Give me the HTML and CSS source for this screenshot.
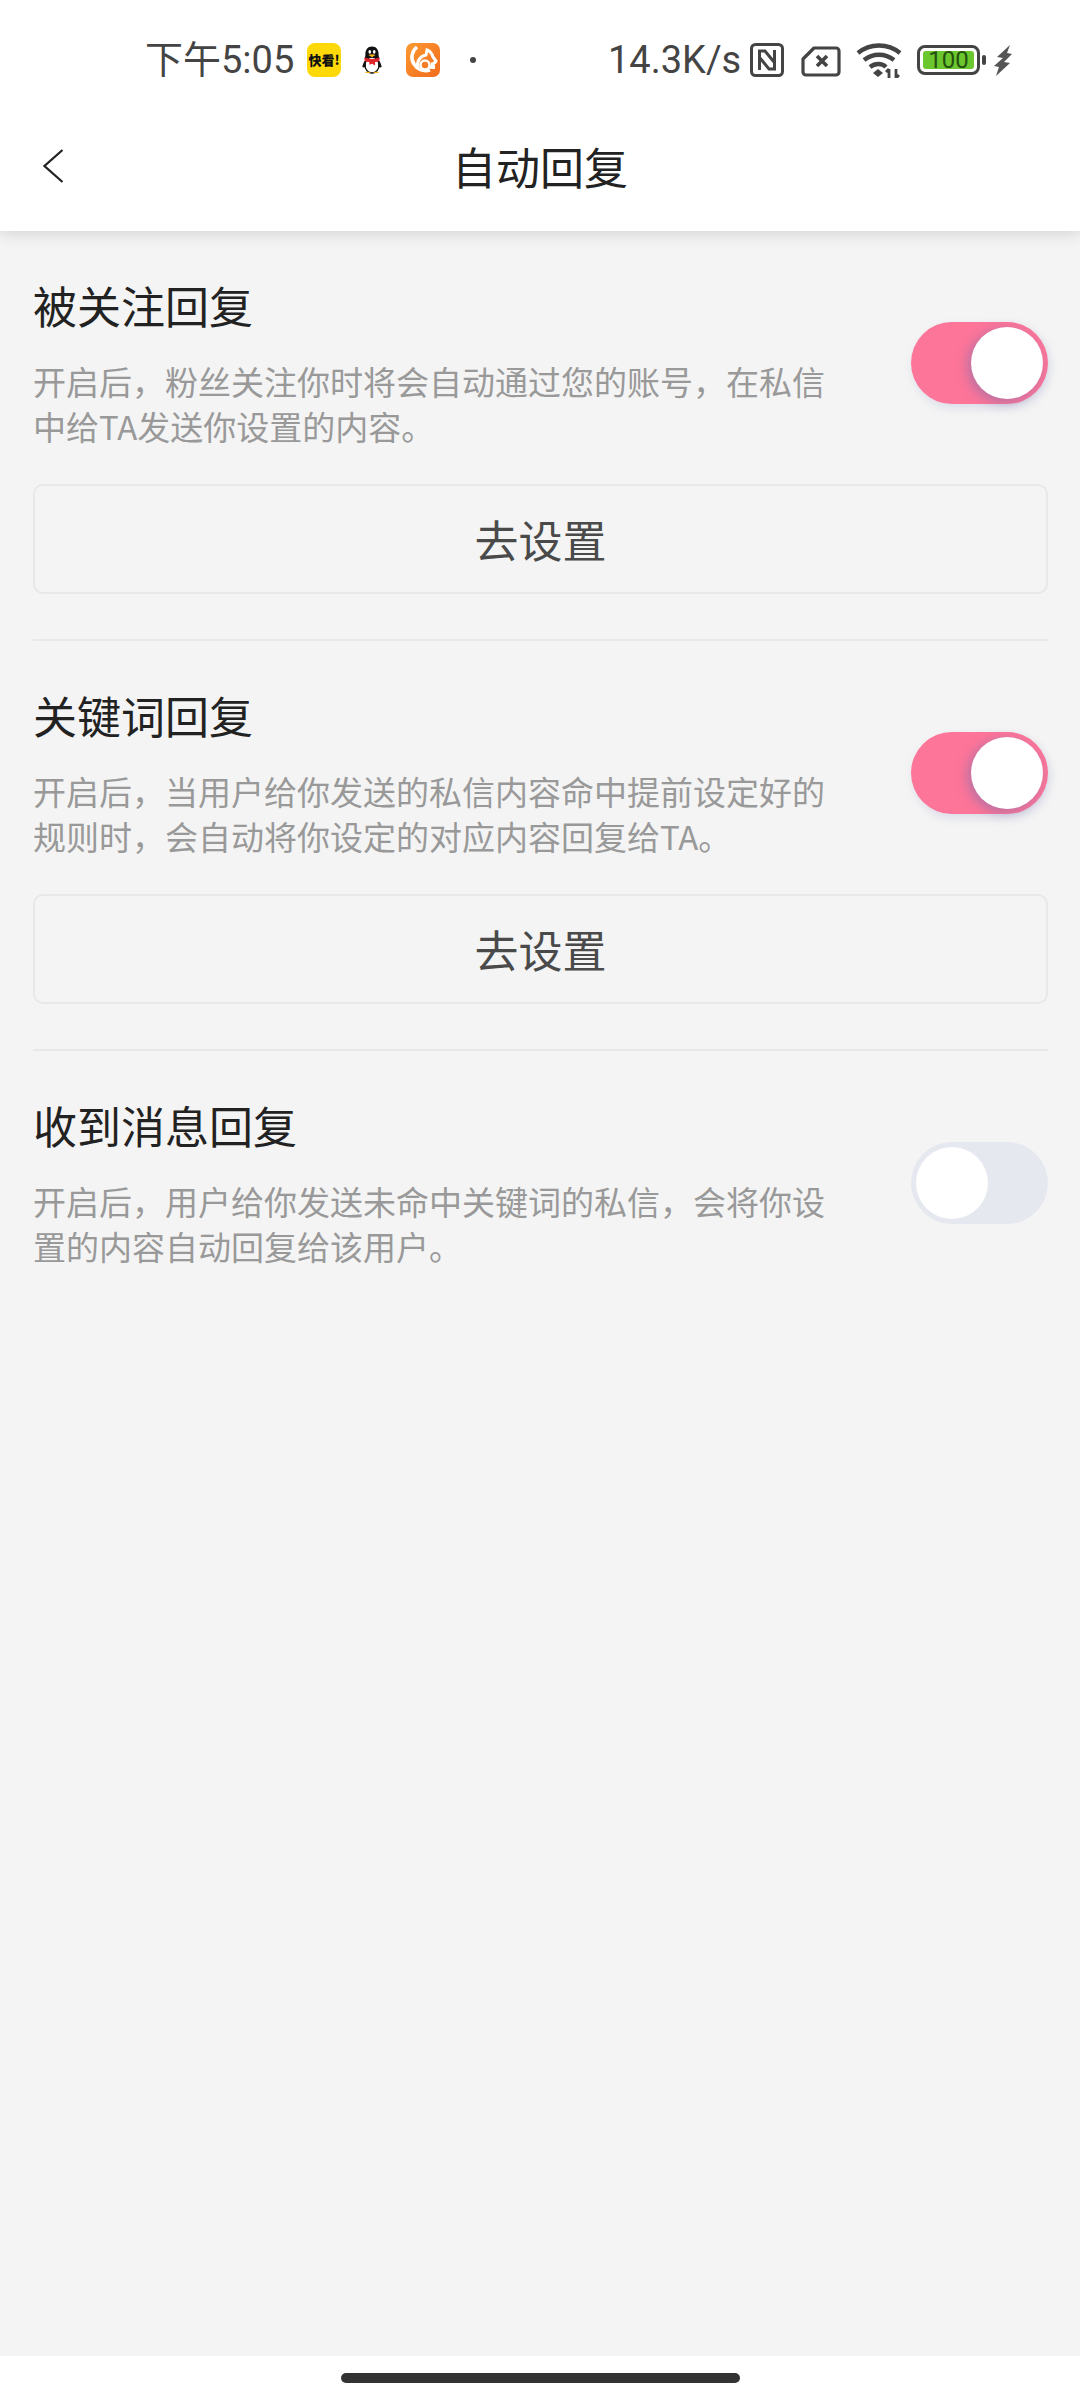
FILE: index.html
```html
<!DOCTYPE html>
<html lang="zh-CN">

<head>
    <meta charset="UTF-8">
    <meta name="viewport" content="width=device-width, initial-scale=1.0">
    <title>自动回复</title>
    <link rel="stylesheet" href="styles.css">
</head>

<body>
    <header class="top">
        <div class="status">
            <div class="status-left">
                <span class="clock">下午5:05</span>
                <span class="kuai">快看!</span>
                <svg class="ic-qq" viewBox="-2 -2 34 38.500">
                    <path d="M15 2c-5 0-7.500 4-7.500 9 0 2-.5 3.500-1 5l17 0c-.5-1.500-1-3-1-5 0-5-2.500-9-7.500-9z" fill="#111"/>
                    <ellipse cx="15" cy="23" rx="8" ry="9" fill="#fff" stroke="#111" stroke-width="1.500"/>
                    <path d="M4 25c1-4 2-6 4-8v8c-2 1-3 1-4 0zM26 25c-1-4-2-6-4-8v8c2 1 3 1 4 0z" fill="#111"/>
                    <path d="M6.500 14.500c5 2 12 2 17 0v3.500c-2 1-3.500 1.500-5 1.500v4l-3.500-2-3 1v-3c-2 0-4-.5-5.500-1.500z" fill="#e0262b"/>
                    <ellipse cx="12.500" cy="8" rx="1.500" ry="2.200" fill="#fff"/>
                    <ellipse cx="17.500" cy="8" rx="1.500" ry="2.200" fill="#fff"/>
                    <path d="M11 11.500c2-1 6-1 8 0l-4 2.500z" fill="#f7b21c"/>
                    <path d="M7 32c1-2 5-2 7 0zM16 32c2-2 6-2 7 0z" fill="#f7b21c"/>
                </svg>
                <svg class="ic-uc" viewBox="0 0 34 34">
                    <defs>
                        <linearGradient id="ucbg" x1="0" y1="0" x2="1" y2="1">
                            <stop offset="0" stop-color="#fb9a30"/>
                            <stop offset="1" stop-color="#f26a1b"/>
                        </linearGradient>
                    </defs>
                    <rect width="34" height="34" rx="7" fill="url(#ucbg)"/>
                    <path d="M11 4c-5 4-7 11-3 17 3 5 9 8 16 6" fill="none" stroke="#fff" stroke-width="3.500"/>
                    <path d="M12 25c-2-6 2-12 8-13l1-5c3 1 5 4 6 7l3 4c-1 2-3 3-5 3" fill="none" stroke="#fff" stroke-width="3"/>
                    <circle cx="19" cy="22" r="4.500" fill="none" stroke="#fff" stroke-width="2.500"/>
                    <rect x="24" y="22" width="5" height="4" fill="#fff"/>
                </svg>
                <i class="dot"></i>
            </div>
            <div class="status-right">
                <span class="speed">14.3K/s</span>
                <svg class="ic-nfc" viewBox="0 0 34 34" fill="none" stroke="#444" stroke-width="3">
                    <rect x="1.500" y="1.500" width="31" height="31" rx="4"/>
                    <path d="M9.500 27V8h5.500l9 11"/>
                    <path d="M24.500 7v19h-5.500l-9-11"/>
                </svg>
                <svg class="ic-sim" viewBox="0 0 40 31" fill="none" stroke="#444" stroke-width="3.200">
                    <path d="M13 2h22a3 3 0 0 1 3 3v21a3 3 0 0 1-3 3H5a3 3 0 0 1-3-3V13z" stroke-linejoin="round"/>
                    <path d="M16 10l10 10M26 10L16 20" stroke-width="3.600"/>
                </svg>
                <svg class="ic-wifi" viewBox="0 0 46 35" fill="none" stroke="#444" stroke-width="4.400">
                    <path d="M2 10c12-10 30-10 42 0"/>
                    <path d="M8 17c9-7 21-7 30 0"/>
                    <path d="M14 24c5-4 12-4 16 0"/>
                    <path d="M17 30l5-4 5 4-5 4z" fill="#444" stroke="none"/>
                    <path d="M33 35v-9m-3 3l3-3M40 26v9m3-3l-3 3" stroke-width="2.800"/>
                </svg>
                <span class="batt"><span class="batt-fill">100</span></span>
                <i class="batt-cap"></i>
                <svg class="ic-bolt" viewBox="0 0 18 31">
                    <path d="M16 0L3 12l6 1-9 8 5 1-3 9 14-13-6-1 8-8-5-1z" fill="#555"/>
                </svg>
            </div>
        </div>
        <nav class="nav">
            <svg class="back" viewBox="0 0 21 34" fill="none" stroke="#222" stroke-width="2.200">
                <path d="M19.500 1L1.500 17l18 16"/>
            </svg>
            <h1 class="nav-title">自动回复</h1>
        </nav>
    </header>

    <main class="list">
        <section class="item">
            <div class="item-head">
                <div class="item-text">
                    <h2 class="item-title">被关注回复</h2>
                    <p class="item-desc">开启后，粉丝关注你时将会自动通过您的账号，在私信中给TA发送你设置的内容。</p>
                </div>
                <span class="switch on"><i class="knob"></i></span>
            </div>
            <div class="btn">去设置</div>
        </section>

        <section class="item">
            <div class="item-head">
                <div class="item-text">
                    <h2 class="item-title">关键词回复</h2>
                    <p class="item-desc">开启后，当用户给你发送的私信内容命中提前设定好的规则时，会自动将你设定的对应内容回复给TA。</p>
                </div>
                <span class="switch on"><i class="knob"></i></span>
            </div>
            <div class="btn">去设置</div>
        </section>

        <section class="item last">
            <div class="item-head">
                <div class="item-text">
                    <h2 class="item-title">收到消息回复</h2>
                    <p class="item-desc">开启后，用户给你发送未命中关键词的私信，会将你设置的内容自动回复给该用户。</p>
                </div>
                <span class="switch"><i class="knob"></i></span>
            </div>
        </section>
    </main>

    <footer class="home">
        <i class="home-bar"></i>
    </footer>
</body>

</html>
```

FILE: styles.css
```css
* {
    box-sizing: border-box;
}

html,
body {
    margin: 0;
    padding: 0;
}

body {
    width: 1080px;
    height: 2400px;
    display: flex;
    flex-direction: column;
    background-color: #f4f4f4;
    font-family: "Noto Sans CJK SC", "Noto Sans", sans-serif;
    overflow: hidden;
}

/* header */
.top {
    height: 231px;
    background-color: #fff;
    box-shadow: 0 3px 14px rgba(0, 0, 0, 0.13);
    position: relative;
    z-index: 1;
}

.status {
    height: 100px;
    padding: 20px 68px 0 145px;
    display: flex;
    justify-content: space-between;
    align-items: center;
}

.status-left,
.status-right {
    display: flex;
    align-items: center;
    color: #444;
}

.clock {
    font-size: 38px;
    line-height: 40px;
    width: 162px;
    white-space: nowrap;
    font-family: "Roboto", "Noto Sans CJK SC", sans-serif;
}

.kuai {
    width: 34px;
    height: 34px;
    border-radius: 8px;
    background-color: #ffd80a;
    color: #111;
    font-size: 13px;
    font-weight: 900;
    line-height: 34px;
    text-align: center;
    white-space: nowrap;
    overflow: hidden;
}

.ic-qq {
    width: 30px;
    height: 34px;
    margin-left: 16px;
}

.ic-uc {
    width: 34px;
    height: 34px;
    margin-left: 19px;
}

.dot {
    width: 6px;
    height: 6px;
    border-radius: 50%;
    background-color: #444;
    margin-left: 30px;
}

.speed {
    font-family: "Roboto", sans-serif;
    font-size: 38px;
    line-height: 40px;
    width: 142px;
    white-space: nowrap;
}

.ic-nfc {
    width: 34px;
    height: 34px;
}

.ic-sim {
    width: 40px;
    height: 31px;
    margin-left: 17px;
    margin-top: 3px;
}

.ic-wifi {
    width: 46px;
    height: 35px;
    margin-left: 15px;
}

.batt {
    width: 63px;
    height: 30px;
    margin-left: 15px;
    border: 3px solid #444;
    border-radius: 8px;
    padding: 3px;
    display: flex;
}

.batt-fill {
    flex: 1;
    background-color: #6cc72e;
    border-radius: 3px;
    color: #24500f;
    font-family: "Roboto", sans-serif;
    font-size: 24px;
    line-height: 18px;
    text-align: center;
}

.batt-cap {
    width: 4px;
    height: 10px;
    margin-left: 2px;
    border-radius: 2px;
    background-color: #444;
}

.ic-bolt {
    width: 18px;
    height: 31px;
    margin-left: 8px;
}

.nav {
    height: 131px;
    position: relative;
    display: flex;
    align-items: center;
    justify-content: center;
}

.back {
    position: absolute;
    left: 43px;
    top: 49px;
    width: 21px;
    height: 34px;
}

.nav-title {
    margin: 0;
    font-size: 44px;
    font-weight: 400;
    line-height: 60px;
    color: #222;
}

/* list */
.list {
    flex: 1;
    padding: 0 32px 0 33px;
}

.item {
    height: 410px;
    padding-top: 47px;
    border-bottom: 2px solid #e8e8e8;
}

.item.last {
    border-bottom: 0;
}

.item-head {
    display: flex;
    justify-content: space-between;
    align-items: flex-start;
}

.item-text {
    width: 800px;
}

.item-title {
    margin: 0;
    font-size: 44px;
    font-weight: 400;
    line-height: 54px;
    color: #222;
}

.item-desc {
    margin: 27px 0 0;
    font-size: 33px;
    line-height: 45px;
    color: #999;
}

.switch {
    width: 137px;
    height: 82px;
    margin-top: 44px;
    padding: 5px;
    border-radius: 41px;
    background-color: #e6e8ef;
    display: flex;
}

.switch.on {
    background-color: #fd7599;
    justify-content: flex-end;
    box-shadow: 2px 4px 10px rgba(120, 130, 190, 0.2);
}

.knob {
    width: 72px;
    height: 72px;
    border-radius: 50%;
    background-color: #fff;
}

.switch.on .knob {
    box-shadow: -3px 3px 12px rgba(130, 110, 170, 0.6);
}

.btn {
    height: 110px;
    margin-top: 35px;
    border: 2px solid #e8e8e8;
    border-radius: 10px;
    font-size: 44px;
    line-height: 106px;
    text-align: center;
    color: #4a4a4a;
}

/* bottom bar */
.home {
    height: 44px;
    padding-top: 17px;
    background-color: #fff;
    display: flex;
    justify-content: center;
}

.home-bar {
    width: 399px;
    height: 10px;
    border-radius: 5px;
    background-color: #333;
}
```
